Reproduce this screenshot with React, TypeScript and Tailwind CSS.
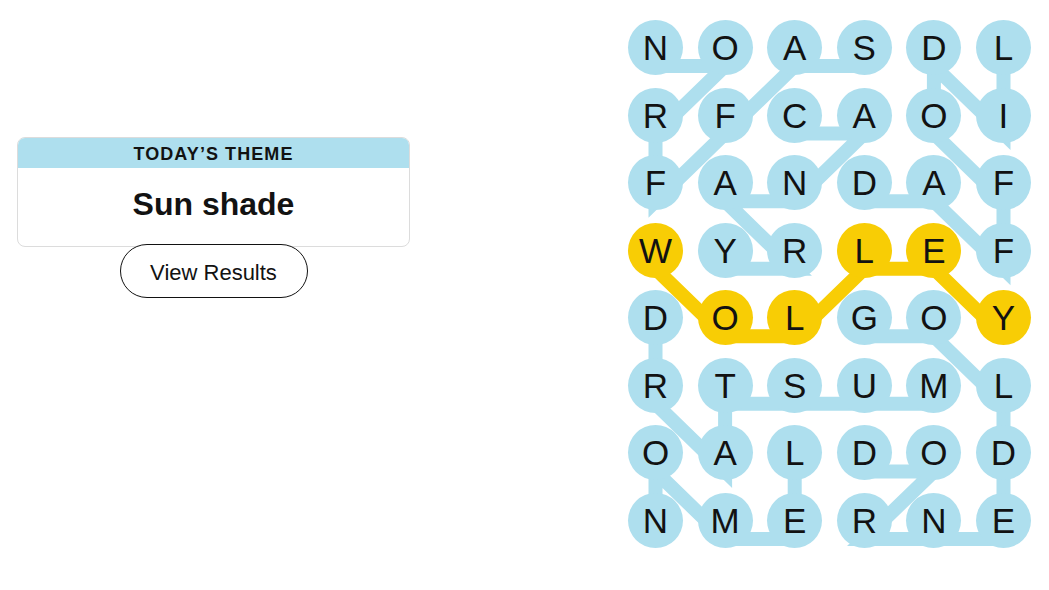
import React from 'react';

const LETTERS = [
  'NOASDL',
  'RFCAOI',
  'FANDAF',
  'WYRLEF',
  'DOLGOY',
  'RTSUML',
  'OALDOD',
  'NMERNE',
];

// cell pitch inside the board
const COL = 69.6;
const ROW = 67.57;
const R = 27.5;
const LINE_DY = 18.5;

type Cell = [number, number];

const WORDS: { path: Cell[]; spangram?: boolean }[] = [
  { path: [[3, 0], [2, 0], [1, 1], [0, 2], [0, 1], [1, 0], [0, 0]] },
  { path: [[3, 2], [4, 2], [5, 3], [5, 2], [4, 1], [4, 0], [5, 1], [5, 0]] },
  { path: [[2, 1], [3, 1], [2, 2], [1, 2], [2, 3], [1, 3]] },
  { path: [[4, 5], [3, 5], [2, 5], [1, 5], [1, 6], [0, 5], [0, 4]] },
  { path: [[2, 6], [2, 7], [1, 7], [0, 6], [0, 7]] },
  { path: [[3, 4], [4, 4], [5, 5], [5, 6], [5, 7], [4, 7], [3, 7], [4, 6], [3, 6]] },
  { path: [[5, 4], [4, 3], [3, 3], [2, 4], [1, 4], [0, 3]], spangram: true },
];

const spanCells = new Set(WORDS.filter(w => w.spangram).flatMap(w => w.path.map(([c, r]) => `${c}-${r}`)));

const pt = ([c, r]: Cell) => `${R + c * COL},${R + r * ROW + LINE_DY}`;

const Board = () => (
  <div className="relative w-[403px] h-[528px]">
    <svg className="absolute left-0 top-0 z-0 overflow-visible" width="403" height="528">
      {WORDS.map((w, i) => (
        <polyline
          key={i}
          points={w.path.map(pt).join(' ')}
          fill="none"
          stroke={w.spangram ? '#f8cd05' : '#aedfee'}
          strokeWidth={14}
          strokeLinejoin="miter"
          strokeMiterlimit={10}
        />
      ))}
    </svg>
    <div className="relative z-10 grid grid-cols-[repeat(6,55px)] gap-x-[14.6px] gap-y-[12.57px]">
      {LETTERS.flatMap((row, r) =>
        row.split('').map((ch, c) => (
          <div
            key={`${r}-${c}`}
            className={`w-[55px] h-[55px] rounded-full flex items-center justify-center text-[35px] leading-none text-[#121212] ${
              spanCells.has(`${c}-${r}`) ? 'bg-[#f8cd05]' : 'bg-[#aedfee]'
            }`}
          >
            {ch}
          </div>
        ))
      )}
    </div>
  </div>
);

export default function App() {
  return (
    <div className="w-[1049px] h-[590px] bg-white flex font-['Liberation_Sans',Arial,sans-serif] text-[#121212]">
      <div className="w-[393px] ml-[17px] pt-[137px]">
        <div className="border border-[#dcdcdc] rounded-[8px] overflow-hidden">
          <div className="h-[30px] bg-[#aedfee] flex items-center justify-center pt-[3px] text-[18px] font-bold tracking-[0.06em] uppercase">
            Today’s Theme
          </div>
          <div className="h-[78px] flex items-center justify-center pb-[6px] text-[32px] font-bold">
            Sun shade
          </div>
        </div>
        <div className="flex justify-center -mt-[3px]">
          <button className="w-[188px] h-[54px] rounded-full border border-[#121212] bg-white pt-[2px] text-[22px]">
            View Results
          </button>
        </div>
      </div>
      <div className="ml-[218px] pt-[20px]">
        <Board />
      </div>
    </div>
  );
}
